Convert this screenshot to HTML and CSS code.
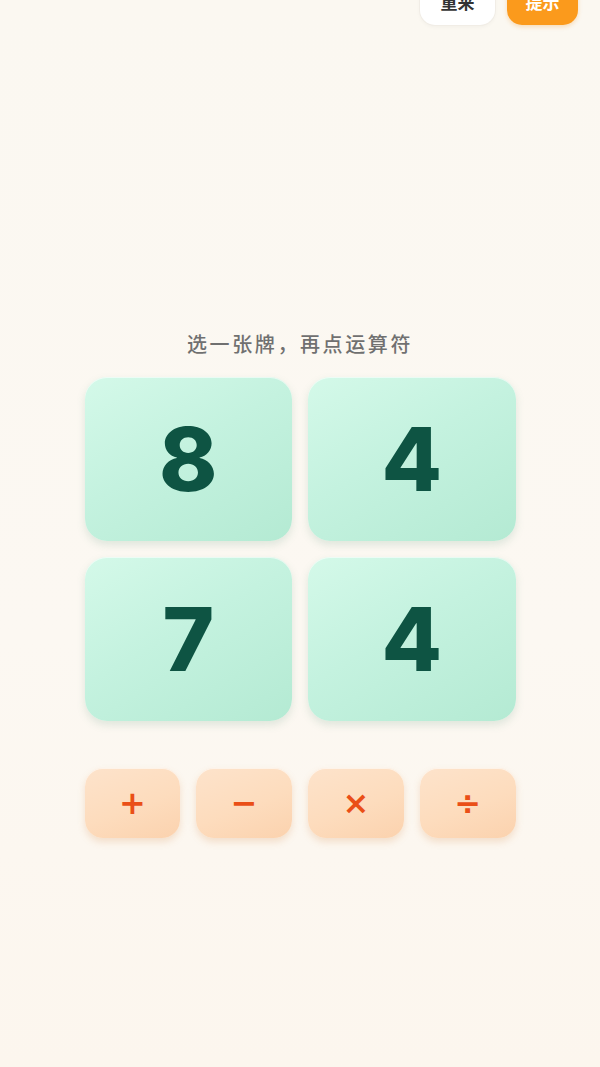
FILE: index.html
```html
<!DOCTYPE html>
<html lang="zh-CN">
<head>
<meta charset="utf-8">
<title>24点</title>
<link rel="stylesheet" href="styles.css">
</head>
<body>
<div class="page">
  <header class="topbar">
    <button class="btn btn-light">重来</button>
    <button class="btn btn-orange">提示</button>
  </header>
  <main class="game">
    <p class="hint">选一张牌，再点运算符</p>
    <div class="cards">
      <div class="card">8</div>
      <div class="card">4</div>
      <div class="card">7</div>
      <div class="card">4</div>
    </div>
    <div class="ops">
      <button class="op">+</button>
      <button class="op">−</button>
      <button class="op">×</button>
      <button class="op">÷</button>
    </div>
  </main>
</div>
</body>
</html>
```
FILE: styles.css
```css
* { box-sizing: border-box; }
html, body { margin: 0; padding: 0; }
body {
  font-family: "Noto Sans CJK SC", "Noto Sans", sans-serif;
  background: linear-gradient(180deg, #fbf8f1 0%, #fcf8f2 60%, #fcf6ee 100%);
  min-height: 1067px;
  overflow: hidden;
}
.page { width: 600px; min-height: 1067px; }
.topbar {
  display: flex;
  justify-content: flex-end;
  gap: 12px;
  padding-right: 22px;
  margin-top: -22px;
}
.btn {
  height: 47px;
  border-radius: 15px;
  border: none;
  font-family: "Noto Sans CJK SC", sans-serif;
  font-size: 17px;
  font-weight: 700;
  padding: 0;
}
.btn-light {
  width: 75px;
  background: #ffffff;
  color: #333;
  box-shadow: 0 0 0 1px #f1ede6, 0 2px 4px rgba(0,0,0,0.04);
}
.btn-orange {
  width: 71px;
  background: #fb9a1c;
  color: #fff;
  box-shadow: 0 2px 4px rgba(240,140,20,0.25);
}
.game {
  display: flex;
  flex-direction: column;
  align-items: center;
  padding-top: 305px;
}
.hint {
  margin: 0;
  height: 28px;
  line-height: 28px;
  font-size: 20px;
  font-weight: 500;
  color: #707070;
  letter-spacing: 2.6px;
}
.cards {
  margin-top: 19px;
  width: 431px;
  display: grid;
  grid-template-columns: 1fr 1fr;
  grid-auto-rows: 164px;
  gap: 16px;
}
.card {
  border-radius: 22px;
  background: linear-gradient(150deg, #d4f9e9 0%, #c4f2df 45%, #b4ead3 100%);
  box-shadow: 0 4px 8px rgba(90,150,120,0.18), inset 0 1px 0 rgba(255,255,255,0.6);
  display: flex;
  align-items: center;
  justify-content: center;
  font-family: "Inter", "Noto Sans", sans-serif;
  font-weight: 800;
  font-size: 88px;
  color: #0e5443;
  line-height: 1;
}
.ops {
  margin-top: 47px;
  width: 431px;
  display: grid;
  grid-template-columns: repeat(4, 1fr);
  gap: 16px;
}
.op {
  height: 70px;
  border: none;
  border-radius: 18px;
  background: linear-gradient(160deg, #fde3cb 0%, #fddcbd 55%, #fbd2ae 100%);
  box-shadow: 0 4px 7px rgba(220,150,90,0.25), inset 0 1px 0 rgba(255,255,255,0.6);
  color: #ea4f17;
  font-family: "DejaVu Sans", sans-serif;
  font-weight: 700;
  font-size: 32px;
  line-height: 1;
  padding: 0;
}
```
